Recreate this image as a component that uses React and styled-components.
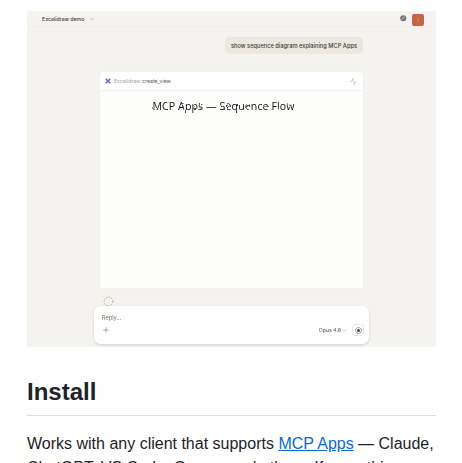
import React from 'react';
import styled, { createGlobalStyle } from 'styled-components';
import { ChevronDown, Plus, Activity } from 'lucide-react';

const Global = createGlobalStyle`
	html, body {
		margin: 0;
		height: 463px;
		overflow: hidden;
		background: #fff;
	}
`;

const Page = styled.div`
	padding: 11px 26px 0 27px;
	font-family: 'Liberation Sans', Arial, sans-serif;
	color: #1f2328;
`;

const Shot = styled.div`
	height: 336px;
	background: #f5f3ef;
	display: flex;
	flex-direction: column;
	align-items: center;
	filter: blur(0.25px);
	font-family: Inter, 'Liberation Sans', sans-serif;
`;

const TopBar = styled.div`
	align-self: stretch;
	height: 15px;
	display: flex;
	align-items: center;
	padding: 0 12px 0 15px;
	border-bottom: 1px solid #f1efea;
`;

const ChatTitle = styled.span`
	font-size: 5.2px;
	font-weight: 500;
	color: #3d3d3a;
	margin-right: 5px;
`;

const Spacer = styled.div`
	flex: 1;
`;

const Avatar = styled.div`
	width: 12px;
	height: 12px;
	margin: 2px 0 0 5.5px;
	border-radius: 2px;
	background: #c4654a;
	color: #f0c08a;
	font-size: 5px;
	display: flex;
	align-items: center;
	justify-content: center;
`;

const Bubble = styled.div`
	align-self: flex-end;
	margin: 10px 73px 0 0;
	height: 17px;
	padding: 0 6px;
	display: flex;
	align-items: center;
	background: #ece8df;
	border-radius: 5px;
	font-size: 5.7px;
	font-weight: 500;
	color: #3d3d3a;
	white-space: nowrap;
`;

const Card = styled.div`
	margin-top: 18px;
	width: 263px;
	height: 215.5px;
	background: #fff;
	border-radius: 3px;
	box-shadow: 0 0 1px rgba(0, 0, 0, 0.12);
	display: flex;
	flex-direction: column;
`;

const CardHead = styled.div`
	height: 18px;
	flex: none;
	display: flex;
	align-items: center;
	padding: 0 6px 0 5px;
	border-bottom: 1px solid #f3f2ee;
	font-size: 5.2px;
`;

const ToolName = styled.span`
	margin-left: 3px;
	color: #a3a19b;
`;

const ToolCall = styled.span`
	margin-left: 1.5px;
	color: #5c5a55;
`;

const Canvas = styled.div`
	flex: 1;
	background: #fdfdfc;
	display: flex;
	justify-content: center;
	padding: 7px 0 0 0;
`;

const SketchTitle = styled.div`
	font-family: 'Open Sans', sans-serif;
	font-size: 10.6px;
	font-weight: 500;
	line-height: 17px;
	letter-spacing: 0.1px;
	color: #111;
	white-space: nowrap;
	transform: translateX(-8px);
	filter: url(#hand);
`;

const FilterDefs = styled.svg`
	position: absolute;
	width: 0;
	height: 0;
`;

const Spinner = styled.svg`
	align-self: flex-start;
	margin: 8px 0 0 75.5px;
	flex: none;
`;

const Composer = styled.div`
	margin-top: -1px;
	width: 275px;
	height: 38px;
	box-sizing: border-box;
	padding: 8px 5px 0 8px;
	background: #fff;
	border-radius: 7px;
	box-shadow: 0 1px 3px rgba(0, 0, 0, 0.14);
	position: relative;
	display: flex;
	flex-direction: column;
`;

const Placeholder = styled.div`
	font-size: 5.6px;
	line-height: 8px;
	color: #6e6c66;
`;

const ComposerRow = styled.div`
	margin-top: 2.5px;
	display: flex;
	align-items: center;
	color: #5f5d57;
`;

const Model = styled.span`
	font-size: 5.2px;
	font-weight: 400;
	color: #55534e;
	margin-right: 1px;
`;

const SendButton = styled.div`
	width: 12px;
	height: 12px;
	margin-left: 5px;
	border-radius: 3px;
	border: 1px solid #eceae5;
	box-sizing: border-box;
	display: flex;
	align-items: center;
	justify-content: center;
`;

const Heading = styled.h2`
	margin: 30px 0 16px;
	padding-bottom: 8px;
	font-size: 24px;
	line-height: 30px;
	font-weight: 700;
	border-bottom: 1px solid #d8dee4;
`;

const Paragraph = styled.p`
	margin: 0;
	font-size: 16px;
	line-height: 24px;
`;

const Link = styled.a`
	color: #0969da;
	text-decoration: underline;
`;

function ExcalidrawMark() {
	return (
		<svg width="6" height="6" viewBox="0 0 8 8" fill="none" stroke="#6965db" strokeWidth="2">
			<path d="M1 1 L7 7 M7 1 L1 7" />
		</svg>
	);
}

function GlobeMark() {
	return (
		<svg width="6.5" height="6.5" viewBox="0 0 6 6" fill="#77756f">
			<circle cx="3" cy="3" r="2.8" />
			<path d="M1.4 4.2 L4.4 1.4" stroke="#e6e4df" strokeWidth="0.7" />
		</svg>
	);
}

function SendMark() {
	return (
		<svg width="7" height="7" viewBox="0 0 7 7" fill="none">
			<circle cx="3.5" cy="3.5" r="2.9" stroke="#45443f" strokeWidth="0.8" strokeDasharray="1 0.6" />
			<circle cx="3.5" cy="3.5" r="1.5" fill="#45443f" />
		</svg>
	);
}

export default function App() {
	return (
		<Page>
			<Global />
			<FilterDefs aria-hidden="true">
				<filter id="hand" x="-5%" y="-20%" width="110%" height="140%">
					<feTurbulence type="fractalNoise" baseFrequency="0.22" numOctaves="2" seed="7" />
					<feDisplacementMap in="SourceGraphic" scale="2.4" xChannelSelector="R" yChannelSelector="G" />
				</filter>
			</FilterDefs>
			<Shot>
				<TopBar>
					<ChatTitle>Excalidraw demo</ChatTitle>
					<ChevronDown size={6} strokeWidth={1.5} color="#77756f" />
					<Spacer />
					<GlobeMark />
					<Avatar>!</Avatar>
				</TopBar>
				<Bubble>show sequence diagram explaining MCP Apps</Bubble>
				<Card>
					<CardHead>
						<ExcalidrawMark />
						<ToolName>Excalidraw</ToolName>
						<ToolCall>create_view</ToolCall>
						<Spacer />
						<Activity size={7} strokeWidth={1.5} color="#9a9893" />
					</CardHead>
					<Canvas>
						<SketchTitle>MCP Apps — Sequence Flow</SketchTitle>
					</Canvas>
				</Card>
				<Spinner width="11" height="11" viewBox="0 0 12 12" fill="none">
					<circle cx="6" cy="6" r="4.8" stroke="#cf8f76" strokeWidth="1" strokeDasharray="1.4 1.4" />
				</Spinner>
				<Composer>
					<Placeholder>Reply...</Placeholder>
					<ComposerRow>
						<Plus size={8} strokeWidth={1.5} />
						<Spacer />
						<Model>Opus 4.6</Model>
						<ChevronDown size={5} strokeWidth={1.5} />
						<SendButton>
							<SendMark />
						</SendButton>
					</ComposerRow>
				</Composer>
			</Shot>
			<Heading>Install</Heading>
			<Paragraph>
				Works with any client that supports <Link href="#">MCP Apps</Link> — Claude, ChatGPT, VS Code, Goose, and others. If something doesn't work, open an issue.
			</Paragraph>
		</Page>
	);
}
